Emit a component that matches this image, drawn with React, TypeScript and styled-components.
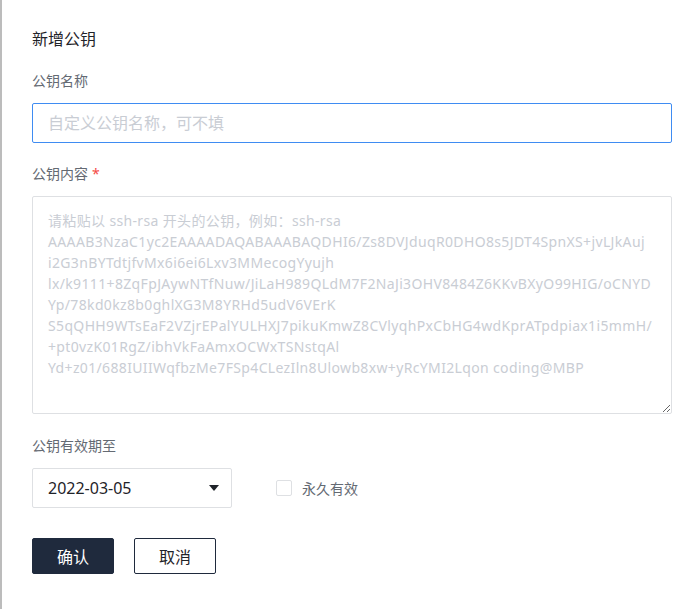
import React from "react";
import styled, { createGlobalStyle } from "styled-components";

const GlobalStyle = createGlobalStyle`
  html, body {
    margin: 0;
    padding: 0;
    background: #ffffff;
  }
  body {
    font-family: "Noto Sans", "Noto Sans CJK SC", sans-serif;
  }
`;

const Page = styled.div`
  display: flex;
  min-height: 609px;
`;

const Backdrop = styled.div`
  width: 2px;
  flex-shrink: 0;
  background: #bcbcbc;
`;

const Drawer = styled.div`
  flex: 1;
  padding: 28px 22px 0 30px;
  display: flex;
  flex-direction: column;
`;

const Title = styled.h2`
  margin: 0 0 21px;
  font-size: 16px;
  line-height: 22px;
  font-weight: 400;
  color: #1f2329;
`;

const Field = styled.div<{ $gap?: number }>`
  display: flex;
  flex-direction: column;
  gap: 12px;
  margin-bottom: ${(p) => p.$gap ?? 21}px;
`;

const Label = styled.label`
  font-size: 14px;
  line-height: 20px;
  color: #646a73;
`;

const Required = styled.span`
  color: #f54a45;
  margin-left: 4px;
`;

const TextInput = styled.input`
  box-sizing: border-box;
  height: 40px;
  width: 100%;
  padding: 0 15px;
  border: 1px solid #3f8cf2;
  border-radius: 2px;
  outline: none;
  font-family: "Noto Sans", "Noto Sans CJK SC", sans-serif;
  font-size: 16px;
  color: #1f2329;

  &::placeholder {
    color: #c9cdd4;
  }
`;

const TextArea = styled.textarea`
  box-sizing: border-box;
  display: block;
  width: 100%;
  height: 218px;
  padding: 13px 15px;
  border: 1px solid #dee0e3;
  border-radius: 2px;
  outline: none;
  resize: vertical;
  font-family: "Noto Sans", "Noto Sans CJK SC", sans-serif;
  font-size: 14px;
  line-height: 21px;
  letter-spacing: 0.35px;
  color: #1f2329;

  &::placeholder {
    color: #c9cdd4;
  }
`;

const ExpiryRow = styled.div`
  display: flex;
  align-items: center;
  gap: 44px;
`;

const DateSelect = styled.div`
  box-sizing: border-box;
  width: 200px;
  height: 40px;
  padding: 0 12px 0 15px;
  display: flex;
  align-items: center;
  justify-content: space-between;
  border: 1px solid #dee0e3;
  border-radius: 2px;
  font-size: 16px;
  color: #1f2329;
  cursor: pointer;
`;

const CheckLabel = styled.label`
  display: flex;
  align-items: center;
  gap: 10px;
  font-size: 14px;
  color: #646a73;
  cursor: pointer;
`;

const CheckBox = styled.span`
  box-sizing: border-box;
  width: 16px;
  height: 16px;
  border: 1px solid #dee0e3;
  border-radius: 2px;
  background: #fff;
`;

const Actions = styled.div`
  display: flex;
  gap: 20px;
`;

const Button = styled.button<{ $primary?: boolean }>`
  box-sizing: border-box;
  width: 82px;
  height: 36px;
  border-radius: 2px;
  border: 1px solid #1f2a3d;
  background: ${(p) => (p.$primary ? "#1f2a3d" : "#ffffff")};
  color: ${(p) => (p.$primary ? "#ffffff" : "#1f2329")};
  font-family: "Noto Sans", "Noto Sans CJK SC", sans-serif;
  font-size: 16px;
  cursor: pointer;
`;

const keyHint = [
  "请粘贴以 ssh-rsa 开头的公钥，例如：ssh-rsa",
  "AAAAB3NzaC1yc2EAAAADAQABAAABAQDHI6/Zs8DVJduqR0DHO8s5JDT4SpnXS+jvLJkAuj",
  "i2G3nBYTdtjfvMx6i6ei6Lxv3MMecogYyujh",
  "lx/k9111+8ZqFpJAywNTfNuw/JiLaH989QLdM7F2NaJi3OHV8484Z6KKvBXyO99HIG/oCNYD",
  "Yp/78kd0kz8b0ghlXG3M8YRHd5udV6VErK",
  "S5qQHH9WTsEaF2VZjrEPalYULHXJ7pikuKmwZ8CVlyqhPxCbHG4wdKprATpdpiax1i5mmH/",
  "+pt0vzK01RgZ/ibhVkFaAmxOCWxTSNstqAl",
  "Yd+z01/688IUIIWqfbzMe7FSp4CLezIln8Ulowb8xw+yRcYMI2Lqon coding@MBP",
].join("\n");

const App: React.FC = () => {
  return (
    <Page>
      <GlobalStyle />
      <Backdrop />
      <Drawer>
        <Title>新增公钥</Title>

        <Field>
          <Label>公钥名称</Label>
          <TextInput placeholder="自定义公钥名称，可不填" />
        </Field>

        <Field $gap={22}>
          <Label>
            公钥内容<Required>*</Required>
          </Label>
          <TextArea placeholder={keyHint} />
        </Field>

        <Field $gap={30}>
          <Label>公钥有效期至</Label>
          <ExpiryRow>
            <DateSelect>
              <span>2022-03-05</span>
              <svg width="10" height="6" viewBox="0 0 10 6">
                <path d="M0 0 H10 L5 6 Z" fill="#1f2329" />
              </svg>
            </DateSelect>
            <CheckLabel>
              <CheckBox />
              永久有效
            </CheckLabel>
          </ExpiryRow>
        </Field>

        <Actions>
          <Button $primary>确认</Button>
          <Button>取消</Button>
        </Actions>
      </Drawer>
    </Page>
  );
};

export default App;
